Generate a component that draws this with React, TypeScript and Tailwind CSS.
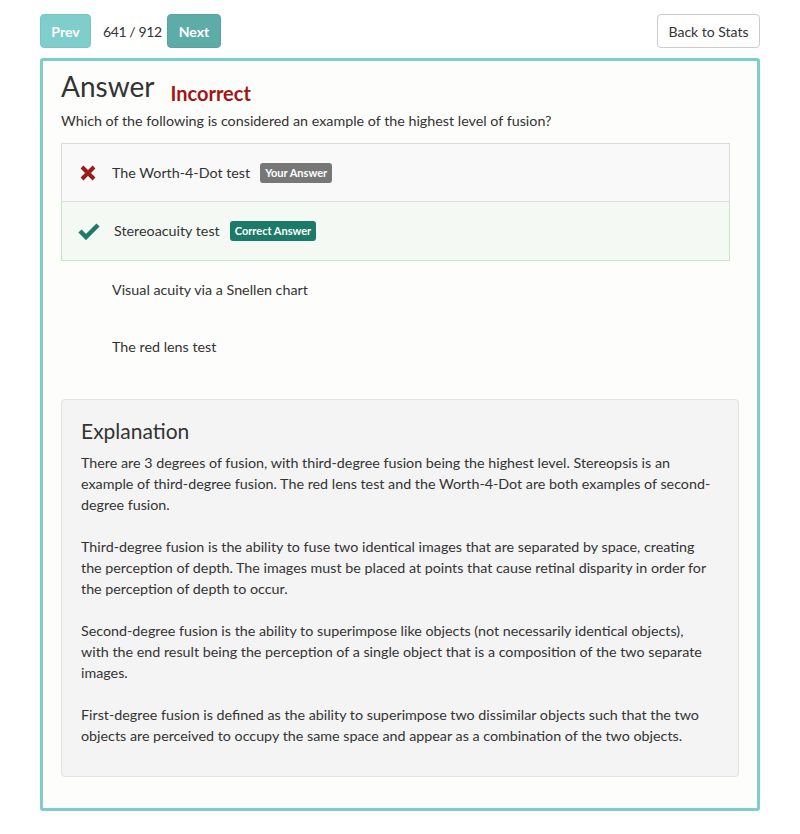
import React from "react";

function XIcon() {
  return (
    <svg width="18" height="18" viewBox="0 0 18 18">
      <path d="M3 3 L15 15 M15 3 L3 15" stroke="#9b1b1b" strokeWidth="4" strokeLinecap="butt" />
    </svg>
  );
}

function CheckIcon() {
  return (
    <svg width="22" height="18" viewBox="0 0 22 18">
      <path d="M2 9 L8 15 L20 3" stroke="#1f7a6c" strokeWidth="4.5" fill="none" strokeLinejoin="miter" />
    </svg>
  );
}

export default function App() {
  const paras = [
    [
      "There are 3 degrees of fusion, with third-degree fusion being the highest level. Stereopsis is an",
      "example of third-degree fusion. The red lens test and the Worth-4-Dot are both examples of second-",
      "degree fusion.",
    ],
    [
      "Third-degree fusion is the ability to fuse two identical images that are separated by space, creating",
      "the perception of depth. The images must be placed at points that cause retinal disparity in order for",
      "the perception of depth to occur.",
    ],
    [
      "Second-degree fusion is the ability to superimpose like objects (not necessarily identical objects),",
      "with the end result being the perception of a single object that is a composition of the two separate",
      "images.",
    ],
    [
      "First-degree fusion is defined as the ability to superimpose two dissimilar objects such that the two",
      "objects are perceived to occupy the same space and appear as a combination of the two objects.",
    ],
  ];
  return (
    <div className="min-h-[834px] bg-white text-[#333]" style={{ fontFamily: "Lato, 'Open Sans', sans-serif" }}>
      <div className="w-[720px] ml-[40px] pt-[14px]">
        <div className="flex items-center h-[34px]">
          <button className="h-[34px] w-[51px] rounded-[4px] bg-[#80cecb] text-white text-[14px] font-bold border border-[#76c6c2]">Prev</button>
          <span className="ml-[12px] w-[64px] text-[14px] tracking-[-0.4px] whitespace-nowrap text-[#333]">641 / 912</span>
          <button className="h-[34px] w-[54px] rounded-[4px] bg-[#5eaca8] text-white text-[14px] font-bold border border-[#57a39f]">Next</button>
          <div className="flex-1" />
          <button className="h-[34px] w-[103px] rounded-[4px] bg-white border border-[#cccccc] text-[14px] text-[#333]">Back to Stats</button>
        </div>
        <div className="mt-[10px] border-[3px] border-[#7fcdca] rounded-[3px] bg-[#fdfdfb] px-[18px] pt-[8px] pb-[31px]">
          <div className="flex items-end">
            <h1 className="text-[28px] leading-[34px] text-[#333]">Answer</h1>
            <span className="ml-[16px] text-[20px] leading-[28px] font-bold text-[#a31515] mb-[-4px]">Incorrect</span>
          </div>
          <p className="mt-[8px] text-[14.3px] leading-[20px]">Which of the following is considered an example of the highest level of fusion?</p>
          <div className="mt-[12px] w-[669px]">
            <div className="h-[59px] flex items-center bg-[#f9f9f9] border border-[#dddddd] pl-[17px]">
              <XIcon />
              <span className="ml-[15px] text-[14.3px]">The Worth-4-Dot test</span>
              <span className="ml-[10px] rounded-[3px] bg-[#777777] text-white text-[11px] font-bold px-[5px] py-[3px] leading-[14px]">Your Answer</span>
            </div>
            <div className="h-[59px] flex items-center bg-[#f4faf3] border border-[#c8e6c3] border-t-0 pl-[16px]">
              <CheckIcon />
              <span className="ml-[14px] text-[14.3px]">Stereoacuity test</span>
              <span className="ml-[10px] rounded-[3px] bg-[#1b7a68] text-white text-[11px] font-bold px-[5px] py-[3px] leading-[14px]">Correct Answer</span>
            </div>
            <div className="h-[57px] flex items-center pl-[51px]">
              <span className="text-[14.3px]">Visual acuity via a Snellen chart</span>
            </div>
            <div className="h-[57px] flex items-center pl-[51px]">
              <span className="text-[14.3px]">The red lens test</span>
            </div>
          </div>
          <div className="mt-[24px] bg-[#f4f4f4] border border-[#e3e3e3] rounded-[4px] px-[19px] pt-[18px] pb-[30px]">
            <h2 className="text-[21px] leading-[26px] text-[#333]">Explanation</h2>
            <div className="mt-[8px] text-[14.3px] leading-[21px]">
              {paras.map((p, i) => (
                <p key={i} className={i > 0 ? "mt-[21px]" : ""}>
                  {p.map((l, j) => (
                    <span key={j} className="block whitespace-nowrap">{l}</span>
                  ))}
                </p>
              ))}
            </div>
          </div>
        </div>
      </div>
    </div>
  );
}
